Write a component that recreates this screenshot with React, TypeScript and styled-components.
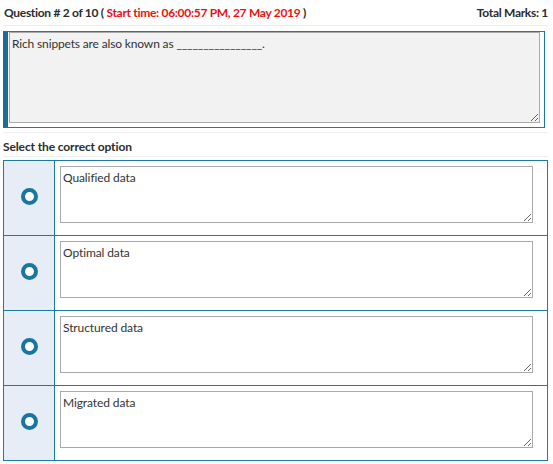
import React from "react";
import styled, { createGlobalStyle } from "styled-components";

const GlobalStyle = createGlobalStyle`
  html, body {
    margin: 0;
    padding: 0;
    background: #fff;
  }
  body {
    font-family: "Lato", "Noto Sans", sans-serif;
    color: #333;
  }
`;

const options = ["Qualified data", "Optimal data", "Structured data", "Migrated data"];

export default function App() {
  return (
    <>
      <GlobalStyle />
      <Page>
        <Header>
          <span>
            Question # 2 of 10 ({" "}
            <StartTime>Start time: 06:00:57 PM, 27 May 2019</StartTime> )
          </span>
          <span>Total Marks: 1</span>
        </Header>

        <QuestionBox>
          <QuestionText
            readOnly
            defaultValue="Rich snippets are also known as ________________."
          />
        </QuestionBox>

        <SectionTitle>Select the correct option</SectionTitle>

        <OptionsTable>
          {options.map((opt) => (
            <OptionRow key={opt}>
              <RadioCell>
                <Radio />
              </RadioCell>
              <AnswerCell>
                <AnswerText readOnly defaultValue={opt} />
              </AnswerCell>
            </OptionRow>
          ))}
        </OptionsTable>
      </Page>
    </>
  );
}

const Page = styled.div`
  width: 553px;
  padding: 0 5px 0 3px;
  box-sizing: border-box;
`;

const Header = styled.div`
  display: flex;
  justify-content: space-between;
  align-items: center;
  height: 25px;
  padding: 0 0 0 1px;
  border-bottom: 1px solid #eee;
  font-size: 12px;
  font-weight: 700;
  letter-spacing: -0.3px;
  color: #2b2b2b;
`;

const StartTime = styled.span`
  color: #f20d0d;
`;

const QuestionBox = styled.div`
  margin: 5px 3px 0 0;
  border: 1px solid #1d7aa3;
  border-left: 5px solid #1a6e94;
  padding: 0 4px 4px 1px;
  display: flex;
`;

const QuestionText = styled.textarea`
  flex: 1;
  height: 91px;
  margin: 0;
  box-sizing: border-box;
  background: #f2f2f2;
  border: 1px solid #aaa;
  padding: 3px 2px;
  font-family: inherit;
  font-size: 12px;
  letter-spacing: -0.15px;
  color: #333;
  outline: none;
`;

const SectionTitle = styled.div`
  margin-top: 4px;
  border-top: 1px solid #f0f0f0;
  border-bottom: 1px solid #f0f0f0;
  height: 19px;
  padding-top: 4px;
  box-sizing: content-box;
  display: flex;
  align-items: center;
  font-size: 12px;
  font-weight: 700;
  letter-spacing: -0.12px;
  color: #2b2b2b;
`;

const OptionsTable = styled.div`
  margin-top: 3px;
  border: 1px solid #1d7aa3;
`;

const OptionRow = styled.div`
  display: grid;
  grid-template-columns: 51px 1fr;
  & + & {
    border-top: 1px solid #1d7aa3;
  }
`;

const RadioCell = styled.div`
  background: #e6edf7;
  border-right: 1px solid #1d7aa3;
  display: flex;
  align-items: center;
  justify-content: center;
  padding-bottom: 3px;
`;

const Radio = styled.span`
  width: 9px;
  height: 9px;
  border-radius: 50%;
  border: 4px solid #1a75a0;
  background: #fff;
`;

const AnswerCell = styled.div`
  padding: 5px 14px 12px 5px;
  display: flex;
`;

const AnswerText = styled.textarea`
  flex: 1;
  height: 57px;
  margin: 0;
  box-sizing: border-box;
  background: #fff;
  border: 1px solid #aaa;
  padding: 3px 2px;
  font-family: inherit;
  font-size: 12px;
  letter-spacing: -0.1px;
  color: #333;
  outline: none;
`;
